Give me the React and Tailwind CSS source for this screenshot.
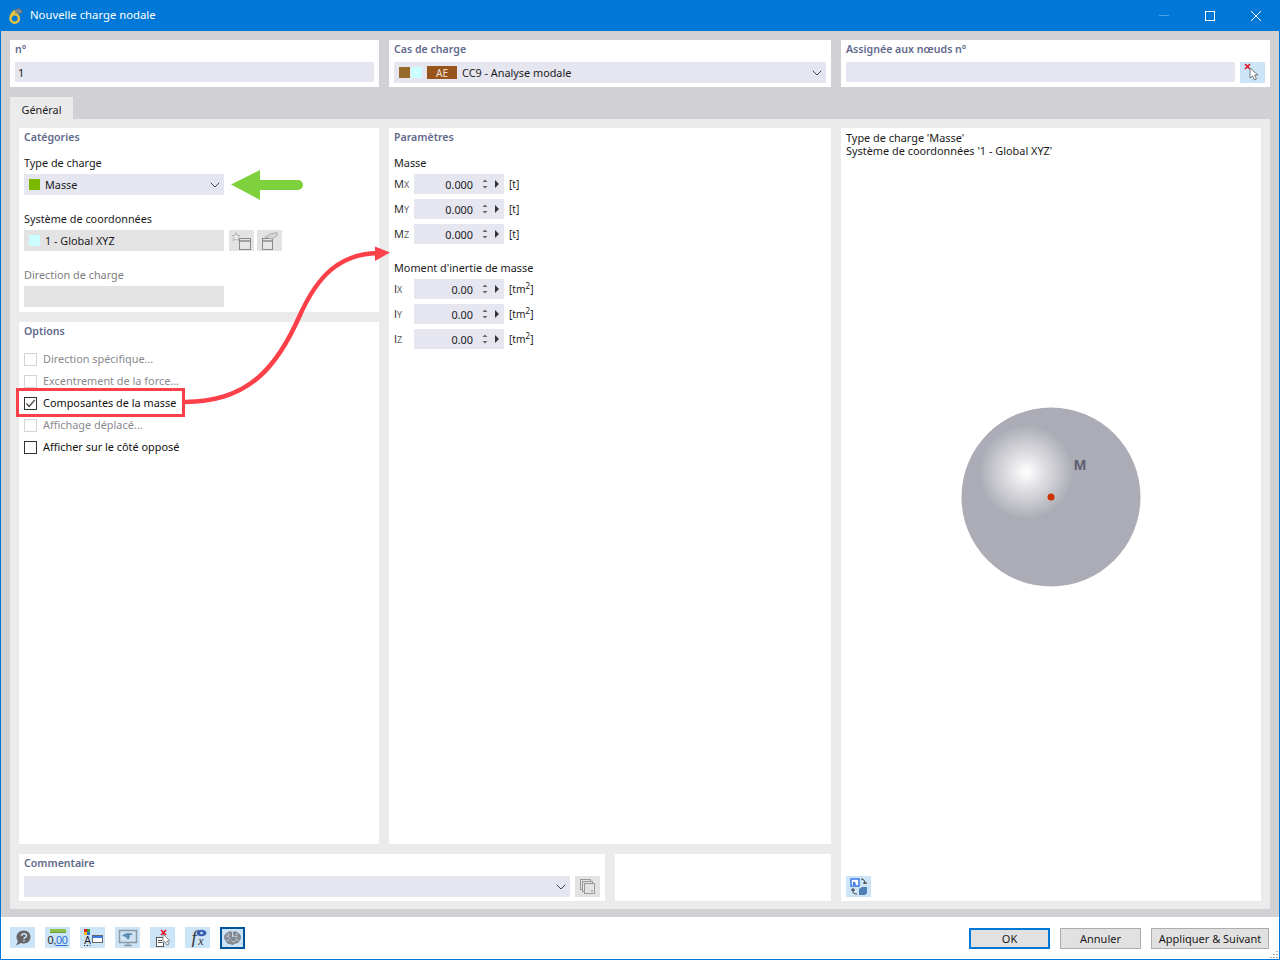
import { ChevronDown } from 'lucide-react'

const FONT = "font-['Noto_Sans',sans-serif]"

function Label({ children, muted }) {
  return <div className={`h-[14px] leading-[14px] text-[10.85px] ${muted ? 'text-[#7d7d82]' : 'text-[#1a1a1a]'}`}>{children}</div>
}

function Heading({ children }) {
  return <div className="h-[14px] leading-[14px] text-[10.6px] font-semibold text-[#5f6a8c]">{children}</div>
}

function Spin({ value, unit, name, sub, sup }) {
  return (
    <div className="flex items-center h-5 mb-[5px]">
      <div className="w-5 text-[11px] text-[#1a1a1a] whitespace-nowrap font-['Open_Sans',sans-serif]">
        {name}<span className="text-[9px] text-[#555]">{sub}</span>
      </div>
      <div className="w-[90px] h-5 bg-[#e6e6f0] flex items-center text-[10.85px] text-[#1a1a1a]">
        <span className="w-[59px] text-right mt-[2px]">{value}</span>
        <svg width="8" height="12" viewBox="0 0 8 12" className="ml-[8px]">
          <path d="M4 1.500 6.500 4h-5zM4 10.500 1.500 8h5z" fill="#666" />
        </svg>
        <svg width="6" height="8" viewBox="0 0 6 8" className="ml-[5px]">
          <path d="M1 0 5 4 1 8z" fill="#333" />
        </svg>
      </div>
      <div className="ml-[5px] text-[10.2px] text-[#1a1a1a] whitespace-nowrap mt-[2px]">
        [{unit}{sup && <sup className="text-[8px] leading-none">2</sup>}]
      </div>
    </div>
  )
}

function Check({ label, on, muted }) {
  return (
    <div className="flex items-center h-[22px]">
      <div className={`w-[13px] h-[13px] border bg-white flex items-center justify-center ${muted ? 'border-[#d4d4d4]' : 'border-[#333]'}`}>
        {on && (
          <svg width="11" height="11" viewBox="0 0 11 11">
            <path d="M1.500 5.500 4.200 8.500 9.800 1.800" fill="none" stroke="#444" strokeWidth="1.300" />
          </svg>
        )}
      </div>
      <span className={`ml-[6px] text-[10.9px] ${muted ? 'text-[#8a8a8e]' : 'text-[#111]'}`}>{label}</span>
    </div>
  )
}

function Tool({ children, active }) {
  return (
    <div className={`w-[25px] flex items-center justify-center bg-[#cce4f7] ${active ? 'h-[22px] border-2 border-[#005499]' : 'h-[21px]'}`}>
      {children}
    </div>
  )
}

function Button({ children, w, primary }) {
  return (
    <div className={`${w} h-[21px] bg-[#e1e1e1] flex items-center justify-center text-[11px] text-[#1a1a1a] pt-[2px] ${primary ? 'border-2 border-[#0078d7]' : 'border border-[#adadad]'}`}>
      {children}
    </div>
  )
}

function NewWindowIcon() {
  return (
    <svg width="22" height="19" viewBox="0 0 22 19">
      <path d="M5 1.500 6 4.500 9 4.500 7 6.500 8 9.500 5 8 2 9.500 3 6.500 1 4.500 4 4.500z" fill="#f2f2f2" stroke="#b5b5b5" />
      <rect x="8.500" y="7.500" width="11" height="11" fill="#e6e6e6" stroke="#8a8a8a" />
      <path d="M8.500 10h11" stroke="#8a8a8a" strokeWidth="1.500" />
    </svg>
  )
}

function EditWindowIcon() {
  return (
    <svg width="22" height="19" viewBox="0 0 22 19">
      <rect x="3.500" y="7.500" width="10" height="11" fill="#e6e6e6" stroke="#8a8a8a" />
      <path d="M3.500 10h10" stroke="#8a8a8a" strokeWidth="1.500" />
      <path d="M6 6 11 3l7-1.500V5l-5 3z" fill="#d4d4d4" stroke="#b0b0b0" />
    </svg>
  )
}

function PickIcon() {
  return (
    <svg width="20" height="19" viewBox="0 0 20 19">
      <path d="M2 1 7 6M7 1 2 6" stroke="#e81123" strokeWidth="1.600" />
      <path d="M7 5v10l2.500-2 2 4 2-1-2-4h3.500z" fill="#fff" stroke="#777" />
    </svg>
  )
}

export default function App() {
  return (
    <div className={`w-[1280px] h-[960px] border-x border-b border-[#0078d7] bg-[#d1d0d5] flex flex-col overflow-hidden relative ${FONT}`}>
      {/* Title bar */}
      <div className="h-[31px] shrink-0 bg-[#0078d7] flex items-center -mx-px pl-[9px] pr-px text-white">
        <svg width="14" height="16" viewBox="0 0 14 16">
          <path d="M4 3 10 0 14 4 8 7z" fill="#7b8794" stroke="#55606b" strokeWidth="0.500" />
          <path d="M6 3C3 5 1.500 7.500 1.500 10.500a4.200 4.200 0 1 0 4.200-4.200 4 4 0 0 0-3.500 2" fill="none" stroke="#e8c33a" strokeWidth="2.400" />
        </svg>
        <span className="ml-[7px] text-[11.3px]">Nouvelle charge nodale</span>
        <div className="ml-auto flex items-center">
          <div className="w-[46px] flex justify-center"><div className="w-[10px] h-px bg-[#4da0e3]" /></div>
          <div className="w-[46px] flex justify-center"><div className="w-[10px] h-[10px] border border-white" /></div>
          <div className="w-[46px] flex justify-center">
            <svg width="10" height="10" viewBox="0 0 10 10"><path d="M0 0 10 10M10 0 0 10" stroke="#fff" strokeWidth="1" /></svg>
          </div>
        </div>
      </div>

      {/* Header cards */}
      <div className="flex gap-[10px] pl-[9px] pr-[9px] pt-[9px] h-[56px] shrink-0">
        <div className="w-[369px] bg-white px-[5px] pt-[2px]">
          <Heading>n°</Heading>
          <div className="mt-[6px] h-5 bg-[#e6e6f0] px-[3px] pt-[2px] flex items-center text-[11px] text-[#1a1a1a]">1</div>
        </div>
        <div className="w-[442px] bg-white px-[5px] pt-[2px]">
          <Heading>Cas de charge</Heading>
          <div className="mt-[6px] h-[21px] bg-[#e6e6f0] flex items-center pl-[5px] text-[10.85px] text-[#1a1a1a]">
            <div className="w-[11px] h-[11px] bg-[#96692d]" />
            <div className="w-[11px] h-[11px] bg-[#ccffff] ml-[1px]" />
            <div className="w-[30px] h-[13px] ml-[5px] bg-[#99541c] text-[#f2e4d8] text-[10px] leading-[14px] text-center">AE</div>
            <span className="ml-[5px] mt-[2px]">CC9 - Analyse modale</span>
            <ChevronDown className="ml-auto mr-[1px] w-4 h-4 text-[#444]" strokeWidth={1.5} />
          </div>
        </div>
        <div className="w-[429px] bg-white px-[5px] pt-[2px]">
          <Heading>Assignée aux nœuds n°</Heading>
          <div className="mt-[6px] flex gap-[5px]">
            <div className="w-[389px] h-5 bg-[#e6e6f0]" />
            <div className="w-[25px] h-[21px] bg-[#cce4f7] flex items-center justify-center"><PickIcon /></div>
          </div>
        </div>
      </div>

      {/* Tab */}
      <div className="pl-[9px] pt-[10px] shrink-0">
        <div className="w-[63px] h-[22px] bg-[#ebebeb] pt-[4px] flex items-center justify-center text-[10.85px] text-[#1a1a1a]">Général</div>
      </div>

      {/* Tab page */}
      <div className="mx-[9px] h-[790px] shrink-0 bg-[#ebebeb] p-[9px] pb-[8px] flex gap-[10px]">
        <div className="w-[812px] flex flex-col gap-[10px]">
          <div className="flex gap-[10px] h-[716px]">
            <div className="w-[360px] flex flex-col gap-[10px]">
              <div className="h-[184px] bg-white px-[5px] pt-[2px]">
                <Heading>Catégories</Heading>
                <div className="mt-[12px]"><Label>Type de charge</Label></div>
                <div className="mt-[4px] w-[200px] h-[21px] bg-[#e6e6f0] flex items-center pl-[5px] text-[10.85px] text-[#1a1a1a]">
                  <div className="w-[11px] h-[11px] bg-[#7ab800]" />
                  <span className="ml-[5px] mt-[2px]">Masse</span>
                  <ChevronDown className="ml-auto mr-[1px] w-4 h-4 text-[#444]" strokeWidth={1.5} />
                </div>
                <div className="mt-[17px]"><Label>Système de coordonnées</Label></div>
                <div className="mt-[4px] flex">
                  <div className="w-[200px] h-[21px] bg-[#e3e3e3] flex items-center pl-[5px] text-[10.85px] text-[#1a1a1a]">
                    <div className="w-[11px] h-[11px] bg-[#ccffff]" />
                    <span className="ml-[5px] mt-[2px]">1 - Global XYZ</span>
                  </div>
                  <div className="ml-[5px] w-[25px] h-[21px] bg-[#e3e3e3] flex items-center justify-center"><NewWindowIcon /></div>
                  <div className="ml-[3px] w-[25px] h-[21px] bg-[#e3e3e3] flex items-center justify-center"><EditWindowIcon /></div>
                </div>
                <div className="mt-[17px]"><Label muted>Direction de charge</Label></div>
                <div className="mt-[4px] w-[200px] h-[21px] bg-[#e3e3e3]" />
              </div>
              <div className="flex-1 bg-white px-[5px] pt-[2px]">
                <Heading>Options</Heading>
                <div className="mt-[10px]">
                  <Check label="Direction spécifique..." muted />
                  <Check label="Excentrement de la force..." muted />
                  <Check label="Composantes de la masse" on />
                  <Check label="Affichage déplacé..." muted />
                  <Check label="Afficher sur le côté opposé" />
                </div>
              </div>
            </div>
            <div className="w-[442px] bg-white px-[5px] pt-[2px]">
              <Heading>Paramètres</Heading>
              <div className="mt-[12px] mb-[4px]"><Label>Masse</Label></div>
              <Spin name="M" sub="X" value="0.000" unit="t" />
              <Spin name="M" sub="Y" value="0.000" unit="t" />
              <Spin name="M" sub="Z" value="0.000" unit="t" />
              <div className="mt-[17px] mb-[4px]"><Label>Moment d'inertie de masse</Label></div>
              <Spin name="I" sub="X" value="0.00" unit="tm" sup />
              <Spin name="I" sub="Y" value="0.00" unit="tm" sup />
              <Spin name="I" sub="Z" value="0.00" unit="tm" sup />
            </div>
          </div>
          <div className="flex gap-[10px] h-[47px]">
            <div className="w-[586px] bg-white px-[5px] pt-[2px]">
              <Heading>Commentaire</Heading>
              <div className="mt-[6px] flex gap-[5px]">
                <div className="w-[546px] h-[21px] bg-[#e6e6f0] flex items-center justify-end">
                  <ChevronDown className="mr-[1px] w-4 h-4 text-[#444]" strokeWidth={1.5} />
                </div>
                <div className="w-[25px] h-[21px] bg-[#e3e3e3] flex items-center justify-center">
                  <svg width="17" height="16" viewBox="0 0 17 16">
                    <rect x="1.500" y="0.500" width="10" height="10" fill="none" stroke="#9a9a9a" />
                    <rect x="3.500" y="2.500" width="10" height="10" fill="#e3e3e3" stroke="#9a9a9a" />
                    <rect x="5.500" y="4.500" width="10" height="10" fill="#e3e3e3" stroke="#9a9a9a" />
                    <rect x="12" y="11" width="2" height="2" fill="#b0b0b0" />
                  </svg>
                </div>
              </div>
            </div>
            <div className="w-[216px] bg-white" />
          </div>
        </div>

        {/* Preview */}
        <div className="w-[420px] bg-white flex flex-col px-[5px] pt-[3px] pb-[4px]">
          <div className="text-[10.9px] leading-[13px] text-[#1a1a1a]">
            <div>Type de charge 'Masse'</div>
            <div>Système de coordonnées '1 - Global XYZ'</div>
          </div>
          <div className="flex-1 flex justify-center">
            <svg width="180" height="180" viewBox="0 0 180 180" className="mt-[250px]">
              <defs>
                <radialGradient id="shine" cx="65" cy="65" r="47" gradientUnits="userSpaceOnUse">
                  <stop offset="0" stopColor="#ffffff" />
                  <stop offset="1" stopColor="#acacb6" />
                </radialGradient>
              </defs>
              <circle cx="90" cy="90" r="89.500" fill="#acacb6" />
              <circle cx="65" cy="65" r="47" fill="url(#shine)" />
              <circle cx="90" cy="90" r="3.500" fill="#cc3300" />
              <text x="119" y="63" fontSize="15" fontWeight="700" fill="#5e5e72" textAnchor="middle" fontFamily="Liberation Sans">M</text>
            </svg>
          </div>
          <div className="w-[25px] h-[21px] bg-[#cce4f7] flex items-center justify-center">
            <svg width="18" height="17" viewBox="0 0 18 17">
              <rect x="1" y="1" width="8" height="7" fill="#fff" stroke="#3b78e7" strokeWidth="1.500" />
              <path d="M3 7V4h2l1 3z" fill="#3b78e7" />
              <path d="M9 11l3-2h5v6l-2 2H9z" fill="#4f7fb5" />
              <path d="M11 1c3 0 4 2 4 5M13 5h4M3 10v4c0 1 2 2 4 2M1 12h4" fill="none" stroke="#333" />
            </svg>
          </div>
        </div>
      </div>

      {/* Footer */}
      <div className="mt-auto h-[42px] shrink-0 bg-white flex items-start pt-[10px] pl-[9px] pr-[10px]">
        <div className="flex gap-[10px]">
          <Tool>
            <svg width="18" height="18" viewBox="0 0 18 18">
              <path d="M10 1.500c3.500 0 6.500 2.800 6.500 6.500S13.500 14.500 10 14.500c-1 0-2-.2-3-.6L2 16.500l2-4.500C3 11 2.500 9.500 2.500 8c0-3.700 3.500-6.500 7.500-6.500z" fill="#666" />
              <path d="M7.500 6.800c.3-2.600 5-2.600 5 0 0 1.600-2.500 1.700-2.500 3.200M10 11v1.500" fill="none" stroke="#cce4f7" strokeWidth="1.500" />
            </svg>
          </Tool>
          <Tool>
            <div className="flex flex-col items-center">
              <div className="w-[16px] h-[4px] bg-[#8cc152] border-b border-[#6aa033]" />
              <div className="mt-[1px] text-[11px] leading-[12px] tracking-[-0.3px] font-['Liberation_Sans',sans-serif] text-[#222]">0,<span className="text-[#2f6fd0] underline">00</span></div>
            </div>
          </Tool>
          <Tool>
            <svg width="20" height="18" viewBox="0 0 20 18">
              <rect x="1" y="0" width="3" height="3" fill="#e02020" />
              <rect x="4" y="0" width="3" height="3" fill="#3aa635" />
              <rect x="1" y="3" width="3" height="3" fill="#f2b90f" />
              <rect x="4" y="3" width="3" height="3" fill="#2f6fd0" />
              <text x="4.500" y="14.500" fontSize="10" fontFamily="Liberation Sans" textAnchor="middle" fill="#222">A</text>
              <path d="M1 16.500h1M3.500 16.500h1.500M6.500 16.500h1" stroke="#333" />
              <rect x="9.500" y="6.500" width="10" height="7" fill="#fff" stroke="#666" />
              <path d="M9.500 8h10" stroke="#3b78e7" strokeWidth="2" />
            </svg>
          </Tool>
          <Tool>
            <svg width="20" height="18" viewBox="0 0 20 18">
              <rect x="1.500" y="1.500" width="17" height="12" fill="#cfe3f2" stroke="#8b98a5" strokeWidth="1.500" />
              <path d="M4 7c2-3 7-4 11-2-1 1-2 1-3 1 0 2-1 4-2 5-1-2-3-4-6-4z" fill="#5b8fb5" />
              <path d="M10 14v2M6 16.500h8" stroke="#8b98a5" strokeWidth="1.300" />
            </svg>
          </Tool>
          <Tool>
            <svg width="20" height="18" viewBox="0 0 20 18">
              <path d="M8 1l5 5M13 1 8 6" stroke="#e81123" strokeWidth="1.600" />
              <rect x="3.500" y="8.500" width="7" height="9" fill="#fff" stroke="#555" />
              <path d="M5 11.500h4M5 13.500h4" stroke="#555" />
              <path d="M10 5v9l2-1.500 2 3.500 2-1-2-3h3z" fill="#fff" stroke="#888" />
            </svg>
          </Tool>
          <Tool>
            <svg width="22" height="19" viewBox="0 0 22 19">
              <text x="7" y="16" fontSize="18" fontStyle="italic" fontFamily="Liberation Serif" textAnchor="middle" fill="#333">f</text>
              <text x="14" y="17" fontSize="12" fontStyle="italic" fontFamily="Liberation Serif" textAnchor="middle" fill="#333">x</text>
              <ellipse cx="14.500" cy="5" rx="5" ry="3.200" fill="#3b5fb0" />
              <circle cx="14.500" cy="5" r="1.300" fill="#cce4f7" />
            </svg>
          </Tool>
          <Tool active>
            <svg width="19" height="16" viewBox="0 0 19 16">
              <path d="M5 2c2-1.500 3 0 4.500 0S12 0.500 14 2s4 2 4 5-1 2.500-1.500 4-1.500 2.500-3.500 2.500-2 1.500-3.500 1.500S8 14 6.500 14s-2.500-.5-3.500-2.500S1 9.500 1 7s2-3.500 4-5z" fill="#85898f" />
              <path d="M3 6c2 0 3.500 1 4 3M5 3c1 1 1 2 .5 3M9.500 2v5M9.500 5c1 1.500 2.500 2 5 2M14 3c0 1-.5 2-1 2.500M3.500 10.500c1-.5 2-.5 3 0M8.500 11c1.500 1 3 1 4 0M12.500 9.500l3 1" fill="none" stroke="#cce4f7" strokeWidth="0.900" />
            </svg>
          </Tool>
        </div>
        <div className="ml-auto flex gap-[10px] mt-[1px]">
          <Button w="w-[81px]" primary>OK</Button>
          <Button w="w-[81px]">Annuler</Button>
          <Button w="w-[118px]">Appliquer &amp; Suivant</Button>
        </div>
      </div>

      {/* Annotations drawn over the dialog */}
      <svg width="1280" height="960" viewBox="0 0 1280 960" className="absolute left-[-1px] top-0 pointer-events-none">
        <path d="M231 184.500 260 170v10h38a5 5 0 0 1 0 10h-38v10z" fill="#7ed03c" />
        <rect x="17.500" y="389.500" width="166" height="26" fill="none" stroke="#fb4049" strokeWidth="3" />
        <path d="M185 402C250 402 278 365 300 315 318 275 340 254 378 253" fill="none" stroke="#fb4049" strokeWidth="4.500" />
        <path d="M375 246.500 390 252.500 375 261z" fill="#fb4049" />
        <path d="M1277 951v1M1274 954v1M1277 954v1M1271 957v1M1274 957v1M1277 957v1" stroke="#b0b0b0" strokeWidth="2" />
      </svg>
    </div>
  )
}
